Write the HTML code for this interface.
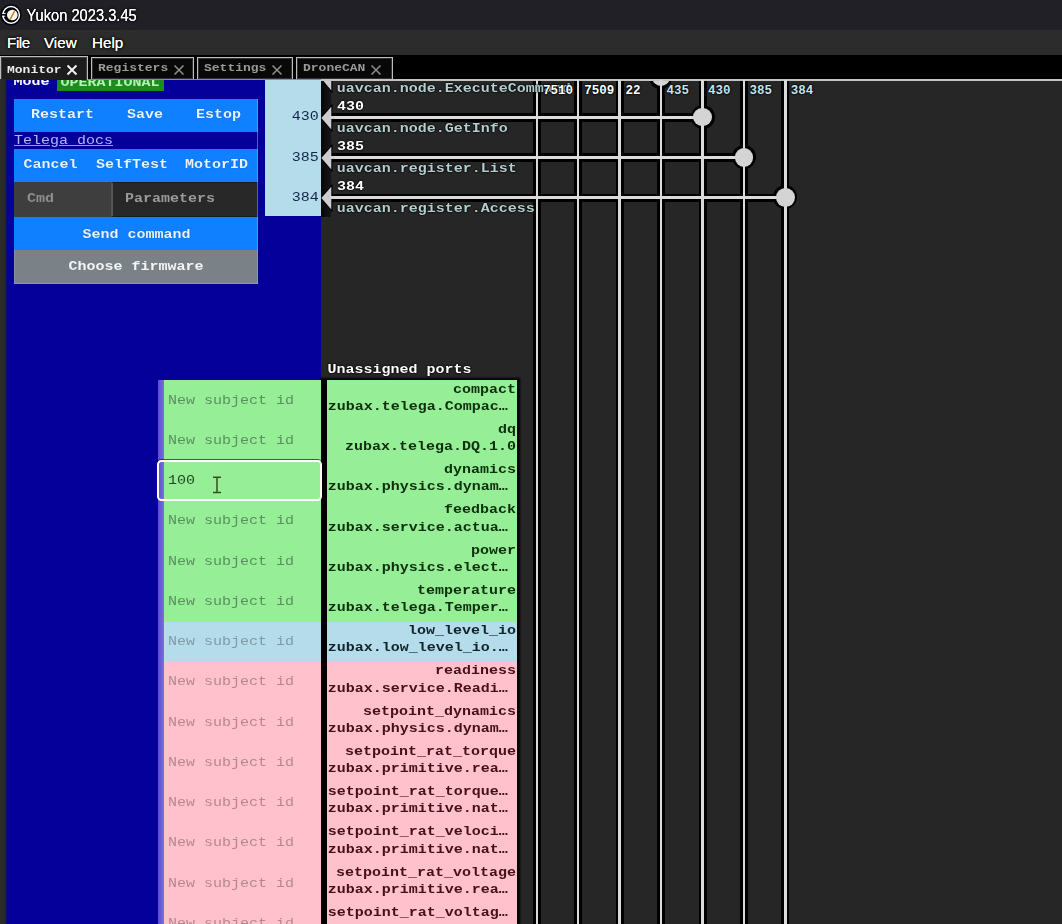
<!DOCTYPE html>
<html>
<head>
<meta charset="utf-8">
<title>Yukon 2023.3.45</title>
<style>
*{box-sizing:border-box;margin:0;padding:0}
html,body{width:1062px;height:924px;overflow:hidden;background:#252525}
body{position:relative;font-family:"Liberation Mono",monospace;font-size:15px;line-height:18px;color:#fff}
.a{position:absolute}
.m{position:absolute;white-space:pre;font-family:"Liberation Mono",monospace;font-size:15px;line-height:18px;transform:scaleY(.84);transform-origin:50% 7px}
.b{font-weight:bold}
.s{position:absolute;white-space:pre;font-family:"Liberation Sans",sans-serif}
/* title / menu / tabs */
#title{left:0;top:0;width:1062px;height:30.4px;background:#212027}
#menu{left:0;top:30.4px;width:1062px;height:24.6px;background:#2c2c2d}
#tabs{left:0;top:55px;width:1062px;height:24px;background:#000}
.tab{position:absolute;top:56.5px;height:22.5px;border:1px solid #bcbcbc;border-bottom:none;background:#080808;box-shadow:inset 0 0 0 1px rgba(150,150,150,.3)}
.tab.on{top:56px;height:24.5px;border-color:#bdbdbd;background:#1c1c1c}
/* left panel */
#edge{left:0;top:79px;width:7px;height:845px;background:linear-gradient(90deg,#2c2c2c 0,#292927 5px,#15155a 6px,#0a00a0 7px)}
#blue{left:7px;top:80px;width:314px;height:844px;background:#06009b}
.btn{position:absolute;background:#0f80ff}
.bt{color:#e6f4ff;font-weight:bold;text-shadow:0 0 1px #0050b0}
/* canvas */
#canvas{left:321px;top:79px;width:741px;height:845px;background:#262626}
.vl{position:absolute;top:80px;width:2.6px;height:844px;background:#dadada}
.hl{position:absolute;left:329px;height:2.9px;background:#dadada}
.dot{position:absolute;width:18.8px;height:18.8px;border-radius:50%;background:#d4d4d4}
.sh{position:absolute;background:#000;filter:blur(.6px)}
.pn{position:absolute;z-index:3;white-space:pre;font-family:"Liberation Mono",monospace;font-size:12.5px;font-weight:bold;line-height:16px;top:82.6px;text-shadow:0 0 2px #000,0 0 2px #000,0 0 1px #000}
.svc{color:#b4ced0;font-weight:bold;text-shadow:0 0 2px #000,0 0 2px #000,0 0 1px #000}
.sid{color:#fff;left:337px;text-shadow:0 0 2px #000,0 0 2px #000,0 0 1px #000}
/* unassigned rows */
.in{position:absolute;left:164.4px;width:156.6px}
.ph{color:#6d9c74}
.cell{position:absolute;left:327px;width:189.5px;overflow:hidden}
</style>
</head>
<body>
<!-- title bar -->
<div class="a" id="title"></div>
<svg class="a" style="left:0;top:3px" width="24" height="24" viewBox="0 0 24 24">
  <circle cx="11.1" cy="11.9" r="10.6" fill="#050505"/>
  <circle cx="11.1" cy="11.9" r="8.3" fill="none" stroke="#fff" stroke-width="1.5"/>
  <rect x="1.5" y="10.9" width="4.6" height="1.8" fill="#050505"/>
  <path d="M2.2 10.4 H5.6 M2.2 13.2 H5.2" stroke="#fff" stroke-width="1"/>
  <circle cx="12.3" cy="12" r="5.3" fill="#fbf7f4"/>
  <path d="M10.3 16.2 L14.3 8.6" stroke="#c8861e" stroke-width="1.5" stroke-linecap="round"/>
</svg>
<div class="s" style="left:26.5px;top:6.6px;font-size:14.7px;line-height:18px;color:#fff;transform:scaleY(1.07);transform-origin:0 14px;text-shadow:0 0 .6px #fff,0 0 3px #000,0 0 3px #000">Yukon 2023.3.45</div>
<!-- menu -->
<div class="a" id="menu"></div>
<div class="s" style="left:7px;top:34.2px;font-size:15.2px;line-height:18px;letter-spacing:-.4px;color:#fff;text-shadow:0 0 .6px #fff,0 0 3px #000,0 0 3px #000">File</div>
<div class="s" style="left:44px;top:34.2px;font-size:15.2px;line-height:18px;color:#fff;text-shadow:0 0 .6px #fff,0 0 3px #000,0 0 3px #000">View</div>
<div class="s" style="left:92px;top:34.2px;font-size:15.2px;line-height:18px;color:#fff;text-shadow:0 0 .6px #fff,0 0 3px #000,0 0 3px #000">Help</div>
<!-- tabs -->
<div class="a" id="tabs"></div>
<div class="tab on" style="left:0;width:88px"></div>
<div class="tab" style="left:91px;width:103px"></div>
<div class="tab" style="left:197px;width:96px"></div>
<div class="tab" style="left:296px;width:97px"></div>
<div class="m b" style="left:7px;top:61.8px;color:#ececec;font-size:13px">Monitor</div>
<div class="m b" style="left:98px;top:60.3px;color:#9a9a9a;font-size:13px">Registers</div>
<div class="m b" style="left:204px;top:60.3px;color:#9a9a9a;font-size:13px">Settings</div>
<div class="m b" style="left:303px;top:60.3px;color:#9a9a9a;font-size:13px">DroneCAN</div>

<svg class="a" style="left:66px;top:64px" width="12" height="12" viewBox="0 0 12 12"><path d="M1.5 1.5 L10.5 10.5 M10.5 1.5 L1.5 10.5" stroke="#f4f4f4" stroke-width="1.9" fill="none"/></svg>
<svg class="a" style="left:173px;top:64px" width="12" height="12" viewBox="0 0 12 12"><path d="M1.5 1.5 L10.5 10.5 M10.5 1.5 L1.5 10.5" stroke="#8c8c8c" stroke-width="1.6" fill="none"/></svg>
<svg class="a" style="left:271px;top:64px" width="12" height="12" viewBox="0 0 12 12"><path d="M1.5 1.5 L10.5 10.5 M10.5 1.5 L1.5 10.5" stroke="#8c8c8c" stroke-width="1.6" fill="none"/></svg>
<svg class="a" style="left:370px;top:64px" width="12" height="12" viewBox="0 0 12 12"><path d="M1.5 1.5 L10.5 10.5 M10.5 1.5 L1.5 10.5" stroke="#8c8c8c" stroke-width="1.6" fill="none"/></svg>
<div class="a" id="edge"></div>
<div class="a" style="left:88px;top:79px;width:233px;height:1.3px;background:#8686d4"></div>
<div class="a" id="blue"></div>
<div class="a" style="left:7px;top:80px;width:314px;height:13px;overflow:hidden">
  <div class="m b" style="left:6.6px;top:-5.6px;color:#fff">Mode</div>
  <div class="a" style="left:50px;top:0;width:107px;height:11px;background:#1c8c1c"></div>
  <div class="m b" style="left:53.5px;top:-5.3px;color:#b4f2b4">OPERATIONAL</div>
</div>
<div class="btn" style="left:14px;top:98.6px;width:243.6px;height:33px"></div>
<div class="m bt" style="left:31px;top:107px">Restart</div>
<div class="m bt" style="left:127px;top:107px">Save</div>
<div class="m bt" style="left:196px;top:107px">Estop</div>
<div class="m" style="left:14px;top:133px;color:#b4b4ff;text-decoration:underline">Telega docs</div>
<div class="btn" style="left:14px;top:149.4px;width:243.6px;height:32.6px"></div>
<div class="m bt" style="left:23.5px;top:156.8px">Cancel</div>
<div class="m bt" style="left:96px;top:156.8px">SelfTest</div>
<div class="m bt" style="left:185px;top:156.8px">MotorID</div>
<div class="a" style="left:14px;top:182px;width:98px;height:35.2px;background:#3e3e3e"></div>
<div class="a" style="left:111px;top:182px;width:146.6px;height:35.2px;background:#282828;border:1px solid #1c1c1c;border-left:2px solid #555"></div>
<div class="m b" style="left:27px;top:191px;color:#8e8e8e">Cmd</div>
<div class="m b" style="left:125px;top:191px;color:#9a9a9a">Parameters</div>
<div class="btn" style="left:14px;top:217.2px;width:243.6px;height:33.3px"></div>
<div class="m bt" style="left:82.5px;top:226.5px">Send command</div>
<div class="a" style="left:14px;top:250.4px;width:243.8px;height:33.3px;background:#7b8287;border-bottom:1px solid #8c8cd8;border-left:1px solid #8a90a8"></div>
<div class="a" style="left:256.8px;top:98.6px;width:1.2px;height:185px;background:rgba(150,165,255,.55)"></div>
<div class="m b" style="left:68.5px;top:258.6px;color:#f4f4f4">Choose firmware</div>

<div class="a" id="canvas"></div>
<div class="a" style="left:321px;top:79.3px;width:741px;height:1.7px;background:#c4c4c4"></div>
<div class="a" style="left:265px;top:80px;width:56px;height:136px;background:#b4dcea"></div>
<div class="a" style="left:321px;top:81px;width:10px;height:136px;background:linear-gradient(90deg,#060606,#161616)"></div>
<div class="sh" style="left:532.9px;top:81px;width:8.2px;height:843px"></div>
<div class="sh" style="left:574.1px;top:81px;width:8.2px;height:843px"></div>
<div class="sh" style="left:615.6px;top:81px;width:8.2px;height:843px"></div>
<div class="sh" style="left:656.8px;top:81px;width:8.2px;height:843px"></div>
<div class="sh" style="left:698.5px;top:81px;width:8.2px;height:843px"></div>
<div class="sh" style="left:739.8px;top:81px;width:8.2px;height:843px"></div>
<div class="sh" style="left:781.3px;top:81px;width:8.2px;height:843px"></div>
<div class="sh" style="left:331px;top:113.2px;width:371.6px;height:8.4px"></div>
<div class="sh" style="left:331px;top:153.4px;width:412.9px;height:8.4px"></div>
<div class="sh" style="left:331px;top:193.6px;width:454.4px;height:8.4px"></div>
<div class="sh" style="left:690.6px;top:105.0px;width:24px;height:24px;border-radius:50%"></div>
<div class="sh" style="left:731.9px;top:145.2px;width:24px;height:24px;border-radius:50%"></div>
<div class="sh" style="left:773.4px;top:185.4px;width:24px;height:24px;border-radius:50%"></div>
<div class="a" style="left:648px;top:81px;width:26px;height:8px;overflow:hidden"><div class="sh" style="left:1.4px;top:-15.5px;width:23px;height:23px;border-radius:50%"></div><div class="dot" style="left:3.6px;top:-13.4px"></div></div>
<div class="vl" style="left:535.7px"></div>
<div class="vl" style="left:576.9px"></div>
<div class="vl" style="left:618.4px"></div>
<div class="vl" style="left:659.6px"></div>
<div class="vl" style="left:701.3px"></div>
<div class="vl" style="left:742.6px"></div>
<div class="vl" style="left:784.1px"></div>
<div class="hl" style="top:115.95px;width:373.6px"></div>
<div class="hl" style="top:156.15px;width:414.9px"></div>
<div class="hl" style="top:196.35px;width:456.4px"></div>
<div class="dot" style="left:693.2px;top:107.6px"></div>
<div class="dot" style="left:734.5px;top:147.8px"></div>
<div class="dot" style="left:776.0px;top:188.0px"></div>
<svg class="a" style="left:321px;top:104.0px" width="14" height="28" viewBox="2 0 14 28"><path d="M2.4 14 L12.3 2.8 L12.3 25.4 Z" fill="#cdcdcd" stroke="#000" stroke-width="2.4" stroke-linejoin="miter" paint-order="stroke"/><rect x="11" y="12" width="5" height="3" fill="#d4d4d4"/></svg>
<svg class="a" style="left:321px;top:144.2px" width="14" height="28" viewBox="2 0 14 28"><path d="M2.4 14 L12.3 2.8 L12.3 25.4 Z" fill="#cdcdcd" stroke="#000" stroke-width="2.4" stroke-linejoin="miter" paint-order="stroke"/><rect x="11" y="12" width="5" height="3" fill="#d4d4d4"/></svg>
<svg class="a" style="left:321px;top:184.4px" width="14" height="28" viewBox="2 0 14 28"><path d="M2.4 14 L12.3 2.8 L12.3 25.4 Z" fill="#cdcdcd" stroke="#000" stroke-width="2.4" stroke-linejoin="miter" paint-order="stroke"/><rect x="11" y="12" width="5" height="3" fill="#d4d4d4"/></svg>
<svg class="a" style="left:321px;top:81px" width="14" height="12" viewBox="2 0 14 12"><path d="M2 -3 L12.3 -14 L12.3 9.5 Z" fill="#cdcdcd" stroke="#000" stroke-width="2.4" paint-order="stroke"/></svg>
<div class="pn" style="left:543px;color:#fff">7510</div>
<div class="pn" style="left:584.3px;color:#fff">7509</div>
<div class="pn" style="left:625.5px;color:#fff">22</div>
<div class="pn" style="left:666.5px;color:#c2e4ee">435</div>
<div class="pn" style="left:708px;color:#c2e4ee">430</div>
<div class="pn" style="left:749.5px;color:#c2e4ee">385</div>
<div class="pn" style="left:790.8px;color:#c2e4ee">384</div>
<div class="m svc" style="left:336.7px;top:80.9px">uavcan.node.ExecuteCommand</div>
<div class="m svc" style="left:336.7px;top:121.1px">uavcan.node.GetInfo</div>
<div class="m svc" style="left:336.7px;top:161.3px">uavcan.register.List</div>
<div class="m svc" style="left:336.7px;top:201.4px">uavcan.register.Access</div>
<div class="m b sid" style="top:99px">430</div>
<div class="m b sid" style="top:139.2px">385</div>
<div class="m b sid" style="top:179.4px">384</div>
<div class="m" style="left:291.8px;top:109.4px;color:#14244c">430</div>
<div class="m" style="left:291.8px;top:149.6px;color:#14244c">385</div>
<div class="m" style="left:291.8px;top:189.8px;color:#14244c">384</div>
<div class="a" style="left:158.2px;top:380.2px;width:6.3px;height:544px;background:linear-gradient(90deg,#5a4cd2,#7c70da)"></div>
<div class="a" style="left:321px;top:379px;width:197.5px;height:546px;background:#000;box-shadow:0 0 2px 1px #000"></div>
<div class="in" style="top:380.20px;height:40.55px;background:#96ee96"></div>
<div class="cell" style="top:380.20px;height:40.55px;background:#96ee96"><div class="m b" style="right:.6px;top:1.5px;color:#0c300c">compact</div><div class="m b" style="left:.8px;top:18.7px;color:#0c300c">zubax.telega.Compac…</div></div>
<div class="m" style="left:168px;top:392.50px;color:#5a8f60">New subject id</div>
<div class="in" style="top:420.45px;height:40.55px;background:#96ee96"></div>
<div class="cell" style="top:420.45px;height:40.55px;background:#96ee96"><div class="m b" style="right:.6px;top:1.5px;color:#0c300c">dq</div><div class="m b" style="right:.6px;top:18.7px;color:#0c300c">zubax.telega.DQ.1.0</div></div>
<div class="m" style="left:168px;top:432.75px;color:#5a8f60">New subject id</div>
<div class="in" style="top:460.70px;height:40.55px;background:#96ee96"></div>
<div class="cell" style="top:460.70px;height:40.55px;background:#96ee96"><div class="m b" style="right:.6px;top:1.5px;color:#0c300c">dynamics</div><div class="m b" style="left:.8px;top:18.7px;color:#0c300c">zubax.physics.dynam…</div></div>
<div class="m" style="left:168px;top:473.00px;color:#1f4a1f">100</div>
<div class="in" style="top:500.95px;height:40.55px;background:#96ee96"></div>
<div class="cell" style="top:500.95px;height:40.55px;background:#96ee96"><div class="m b" style="right:.6px;top:1.5px;color:#0c300c">feedback</div><div class="m b" style="left:.8px;top:18.7px;color:#0c300c">zubax.service.actua…</div></div>
<div class="m" style="left:168px;top:513.25px;color:#5a8f60">New subject id</div>
<div class="in" style="top:541.20px;height:40.55px;background:#96ee96"></div>
<div class="cell" style="top:541.20px;height:40.55px;background:#96ee96"><div class="m b" style="right:.6px;top:1.5px;color:#0c300c">power</div><div class="m b" style="left:.8px;top:18.7px;color:#0c300c">zubax.physics.elect…</div></div>
<div class="m" style="left:168px;top:553.50px;color:#5a8f60">New subject id</div>
<div class="in" style="top:581.45px;height:40.55px;background:#96ee96"></div>
<div class="cell" style="top:581.45px;height:40.55px;background:#96ee96"><div class="m b" style="right:.6px;top:1.5px;color:#0c300c">temperature</div><div class="m b" style="left:.8px;top:18.7px;color:#0c300c">zubax.telega.Temper…</div></div>
<div class="m" style="left:168px;top:593.75px;color:#5a8f60">New subject id</div>
<div class="in" style="top:621.70px;height:40.55px;background:#b4dcea"></div>
<div class="cell" style="top:621.70px;height:40.55px;background:#b4dcea"><div class="m b" style="right:.6px;top:1.5px;color:#10242c">low_level_io</div><div class="m b" style="left:.8px;top:18.7px;color:#10242c">zubax.low_level_io.…</div></div>
<div class="m" style="left:168px;top:634.00px;color:#8399a6">New subject id</div>
<div class="in" style="top:661.95px;height:40.55px;background:#ffc2cc"></div>
<div class="cell" style="top:661.95px;height:40.55px;background:#ffc2cc"><div class="m b" style="right:.6px;top:1.5px;color:#451018">readiness</div><div class="m b" style="left:.8px;top:18.7px;color:#451018">zubax.service.Readi…</div></div>
<div class="m" style="left:168px;top:674.25px;color:#b58890">New subject id</div>
<div class="in" style="top:702.20px;height:40.55px;background:#ffc2cc"></div>
<div class="cell" style="top:702.20px;height:40.55px;background:#ffc2cc"><div class="m b" style="right:.6px;top:1.5px;color:#451018">setpoint_dynamics</div><div class="m b" style="left:.8px;top:18.7px;color:#451018">zubax.physics.dynam…</div></div>
<div class="m" style="left:168px;top:714.50px;color:#b58890">New subject id</div>
<div class="in" style="top:742.45px;height:40.55px;background:#ffc2cc"></div>
<div class="cell" style="top:742.45px;height:40.55px;background:#ffc2cc"><div class="m b" style="right:.6px;top:1.5px;color:#451018">setpoint_rat_torque</div><div class="m b" style="left:.8px;top:18.7px;color:#451018">zubax.primitive.rea…</div></div>
<div class="m" style="left:168px;top:754.75px;color:#b58890">New subject id</div>
<div class="in" style="top:782.70px;height:40.55px;background:#ffc2cc"></div>
<div class="cell" style="top:782.70px;height:40.55px;background:#ffc2cc"><div class="m b" style="left:.8px;top:1.5px;color:#451018">setpoint_rat_torque…</div><div class="m b" style="left:.8px;top:18.7px;color:#451018">zubax.primitive.nat…</div></div>
<div class="m" style="left:168px;top:795.00px;color:#b58890">New subject id</div>
<div class="in" style="top:822.95px;height:40.55px;background:#ffc2cc"></div>
<div class="cell" style="top:822.95px;height:40.55px;background:#ffc2cc"><div class="m b" style="left:.8px;top:1.5px;color:#451018">setpoint_rat_veloci…</div><div class="m b" style="left:.8px;top:18.7px;color:#451018">zubax.primitive.nat…</div></div>
<div class="m" style="left:168px;top:835.25px;color:#b58890">New subject id</div>
<div class="in" style="top:863.20px;height:40.55px;background:#ffc2cc"></div>
<div class="cell" style="top:863.20px;height:40.55px;background:#ffc2cc"><div class="m b" style="right:.6px;top:1.5px;color:#451018">setpoint_rat_voltage</div><div class="m b" style="left:.8px;top:18.7px;color:#451018">zubax.primitive.rea…</div></div>
<div class="m" style="left:168px;top:875.50px;color:#b58890">New subject id</div>
<div class="in" style="top:903.45px;height:40.55px;background:#ffc2cc"></div>
<div class="cell" style="top:903.45px;height:40.55px;background:#ffc2cc"><div class="m b" style="left:.8px;top:1.5px;color:#451018">setpoint_rat_voltag…</div><div class="m b" style="left:.8px;top:18.7px;color:#451018">zubax.primitive.nat…</div></div>
<div class="m" style="left:168px;top:915.75px;color:#b58890">New subject id</div>
<div class="a" style="left:156.8px;top:460px;width:165.4px;height:41px;border:2.2px solid #fff;border-radius:4.5px;box-shadow:0 -1px 0 rgba(0,0,0,.6)"></div>
<svg class="a" style="left:212px;top:476px" width="10" height="18" viewBox="0 0 10 18"><path d="M1 1.2 H9 M5 1.2 V16.6 M1 16.6 H9" stroke="#30501e" stroke-width="1.5" fill="none"/></svg>
<div class="m b" style="left:327.6px;top:362.1px;color:#fff;text-shadow:0 0 2px #000,0 0 2px #000,0 0 1px #000">Unassigned ports</div>
</body>
</html>
